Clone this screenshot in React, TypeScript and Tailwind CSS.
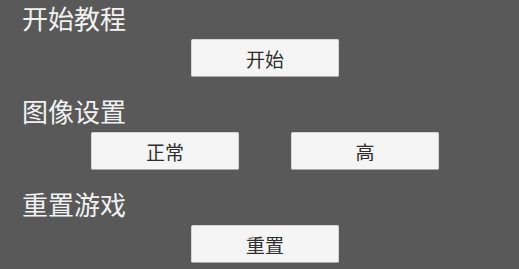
const font = "font-['Noto_Sans_CJK_SC','Noto_Sans',sans-serif]";

function MenuButton({ label }: { label: string }) {
  return (
    <button
      type="button"
      className="flex h-[38px] w-[148px] items-center justify-center rounded-[2px] border border-[#d4d4d4] border-b-[#a9a9a9] bg-[#f5f5f5] text-[19px] leading-none text-[#2e2e2e]"
    >
      {label}
    </button>
  );
}

function Section({ title, children }: { title: string; children: React.ReactNode }) {
  return (
    <div className="flex h-[93px] flex-col">
      <div className="h-[32px] pl-[22px] text-[26px] leading-[32px] text-[#f2f2f2]">{title}</div>
      <div className="mt-[5px] flex justify-center gap-[52px] pl-[11px]">{children}</div>
    </div>
  );
}

export default function App() {
  return (
    <div className={`h-[269px] w-[519px] overflow-hidden bg-[#595959] pt-[2px] ${font}`}>
      <Section title="开始教程">
        <MenuButton label="开始" />
      </Section>
      <Section title="图像设置">
        <MenuButton label="正常" />
        <MenuButton label="高" />
      </Section>
      <Section title="重置游戏">
        <MenuButton label="重置" />
      </Section>
    </div>
  );
}
